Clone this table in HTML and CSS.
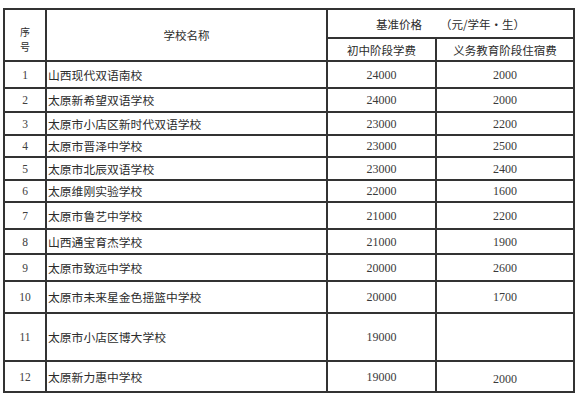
FILE: index.html
```html
<!DOCTYPE html>
<html lang="zh-CN">
<head>
<meta charset="utf-8">
<link rel="stylesheet" href="styles.css">
</head>
<body>
<table class="fees">
  <colgroup>
    <col class="c-no">
    <col class="c-name">
    <col class="c-tuition">
    <col class="c-board">
  </colgroup>
  <thead>
    <tr class="hd1">
      <th rowspan="2" class="no-head"><span class="stack">序</span><span class="stack">号</span></th>
      <th rowspan="2" class="name-head">学校名称</th>
      <th colspan="2" class="price-head">基准价格<span class="unit">（元/学年・生）</span></th>
    </tr>
    <tr class="hd2">
      <th>初中阶段学费</th>
      <th>义务教育阶段住宿费</th>
    </tr>
  </thead>
  <tbody>
    <tr><td class="no">1</td><td class="name">山西现代双语南校</td><td class="num">24000</td><td class="num">2000</td></tr>
    <tr><td class="no">2</td><td class="name">太原新希望双语学校</td><td class="num">24000</td><td class="num">2000</td></tr>
    <tr><td class="no">3</td><td class="name">太原市小店区新时代双语学校</td><td class="num">23000</td><td class="num">2200</td></tr>
    <tr><td class="no">4</td><td class="name">太原市晋泽中学校</td><td class="num">23000</td><td class="num">2500</td></tr>
    <tr><td class="no">5</td><td class="name">太原市北辰双语学校</td><td class="num">23000</td><td class="num">2400</td></tr>
    <tr><td class="no">6</td><td class="name">太原维刚实验学校</td><td class="num">22000</td><td class="num">1600</td></tr>
    <tr><td class="no">7</td><td class="name">太原市鲁艺中学校</td><td class="num">21000</td><td class="num">2200</td></tr>
    <tr><td class="no">8</td><td class="name">山西通宝育杰学校</td><td class="num">21000</td><td class="num">1900</td></tr>
    <tr><td class="no">9</td><td class="name">太原市致远中学校</td><td class="num">20000</td><td class="num">2600</td></tr>
    <tr><td class="no">10</td><td class="name">太原市未来星金色摇篮中学校</td><td class="num">20000</td><td class="num">1700</td></tr>
    <tr><td class="no">11</td><td class="name">太原市小店区博大学校</td><td class="num">19000</td><td class="num"></td></tr>
    <tr><td class="no">12</td><td class="name">太原新力惠中学校</td><td class="num">19000</td><td class="num low">2000</td></tr>
  </tbody>
</table>
</body>
</html>
```

FILE: styles.css
```css
html, body {
  margin: 0;
  padding: 0;
  background: #ffffff;
}

body {
  padding: 8px 0 0 3px;
  font-family: "Noto Sans CJK SC", "Noto Sans", sans-serif;
  color: #2c2c2c;
}

.fees {
  border-collapse: collapse;
  table-layout: fixed;
  width: 570px;
  border: 2px solid #262626;
}

.c-no { width: 42px; }
.c-name { width: 281px; }
.c-tuition { width: 109px; }
.c-board { width: 138px; }

.fees th,
.fees td {
  border: 2px solid #333333;
  padding: 0;
  font-weight: normal;
  font-size: 11.5px;
  line-height: 14px;
  text-align: center;
  vertical-align: middle;
  overflow: hidden;
  white-space: nowrap;
}

.hd1 { height: 29px; }
.hd2 { height: 23px; }

.no-head {
  padding-top: 8px !important;
}

.stack {
  display: block;
  line-height: 15px;
  height: 15px;
  font-size: 10px;
}

.name-head {
  font-size: 11px;
}

.price-head {
  font-size: 11.5px;
}

.unit {
  margin-left: 18px;
}

.fees td.no {
  font-family: "Liberation Serif", "DejaVu Serif", serif;
  font-size: 11.5px;
  color: #404040;
}

.fees td.name {
  text-align: left;
  padding-left: 1px;
  font-size: 11.8px;
}

.fees td.num {
  font-family: "Liberation Serif", "DejaVu Serif", serif;
  font-size: 12px;
  color: #3a3a3a;
}

.fees td.low {
  padding-top: 4px;
}

tbody tr:nth-child(1) { height: 27px; }
tbody tr:nth-child(2) { height: 24px; }
tbody tr:nth-child(3) { height: 23px; }
tbody tr:nth-child(4) { height: 22px; }
tbody tr:nth-child(5) { height: 23px; }
tbody tr:nth-child(6) { height: 22px; }
tbody tr:nth-child(7) { height: 27px; }
tbody tr:nth-child(8) { height: 25px; }
tbody tr:nth-child(9) { height: 27px; }
tbody tr:nth-child(10) { height: 32px; }
tbody tr:nth-child(11) { height: 48px; }
tbody tr:nth-child(12) { height: 31px; }
```
